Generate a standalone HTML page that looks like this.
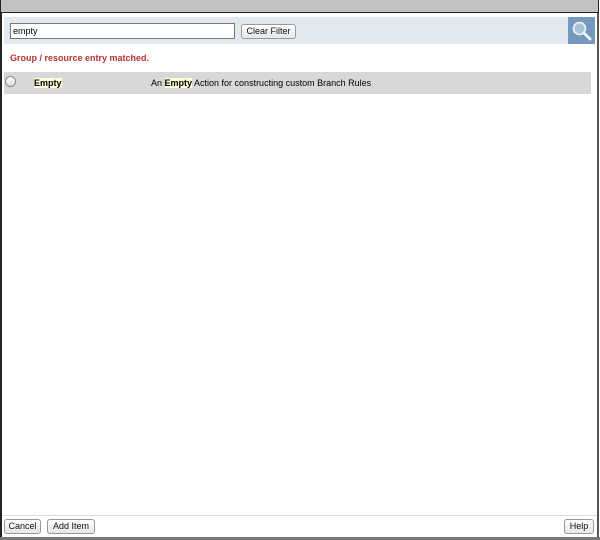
<!DOCTYPE html>
<html><head><style>
*{margin:0;padding:0;box-sizing:border-box}
body{width:600px;height:540px;background:#fff;font-family:"Liberation Sans",sans-serif;font-size:9px;position:relative;overflow:hidden}
.abs{position:absolute}
.btn{position:absolute;height:15px;border:1px solid #999;border-radius:3px;background:linear-gradient(#fff,#e6e6e6);font-size:9px;line-height:13px;text-align:center;color:#111}
.hl{background:#ffffd8;font-weight:bold}
</style></head><body>
<div class="abs" style="left:0;top:0;width:2px;height:540px;background:#222"></div>
<div class="abs" style="left:597px;top:0;width:2px;height:540px;background:#555"></div>
<div class="abs" style="left:0;top:0;width:599px;height:13px;background:#c2c2c2;border:1px solid #222;border-top:none"></div>
<div class="abs" style="left:0;top:537px;width:600px;height:3px;background:#777"></div>
<div class="abs" style="left:4px;top:17px;width:564px;height:27px;background:#e1e8f0"></div>
<div class="abs" style="left:568px;top:17px;width:27px;height:27px;background:#7399bf">
<svg width="27" height="27" viewBox="0 0 27 27"><circle cx="11.5" cy="11.5" r="6" fill="#a9c2da" stroke="#f0f4f8" stroke-width="1.6"/><path d="M16 16 L22 22" stroke="#f0f4f8" stroke-width="3" stroke-linecap="round"/></svg></div>
<div class="abs" style="left:10px;top:23px;width:225px;height:16px;border:1px solid #777;background:#fff;font-size:9px;line-height:14px;padding-left:2px">empty</div>
<div class="btn" style="left:241px;top:24px;width:55px">Clear Filter</div>
<div class="abs" style="left:10px;top:53px;color:#b83232;font-weight:bold;font-size:9px">Group / resource entry matched.</div>
<div class="abs" style="left:4px;top:72px;width:587px;height:22px;background:#d8d8d8"></div>
<div class="abs" style="left:5px;top:76px;width:11px;height:11px;border:1px solid #888;border-radius:50%;background:linear-gradient(#fff,#ddd)"></div>
<div class="abs" style="left:34px;top:78px"><span class="hl">Empty</span></div>
<div class="abs" style="left:151px;top:78px">An <span class="hl">Empty</span> Action for constructing custom Branch Rules</div>
<div class="abs" style="left:2px;top:515px;width:595px;height:1px;background:#ddd"></div>
<div class="btn" style="left:4px;top:519px;width:37px">Cancel</div>
<div class="btn" style="left:47px;top:519px;width:48px">Add Item</div>
<div class="btn" style="left:564px;top:519px;width:30px">Help</div>
</body></html>
